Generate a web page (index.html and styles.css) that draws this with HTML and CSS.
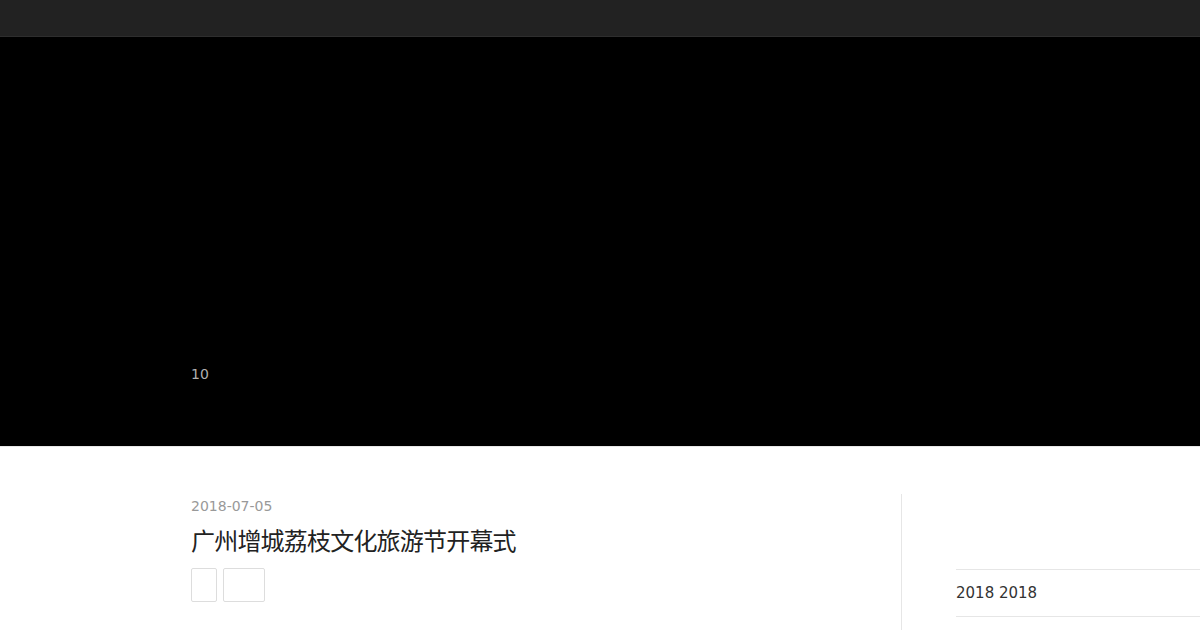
FILE: index.html
```html
<!DOCTYPE html>
<html lang="zh-CN">
<head>
	<meta charset="UTF-8">
	<title>2018-07-05</title>
	<link rel="stylesheet" href="styles.css">
</head>
<body>
	<div id="topbar"></div>
	<div id="hero">
		<div class="hero-inner">
			<div class="hero-count">10</div>
		</div>
	</div>
	<div id="page">
		<div id="main">
			<div class="post-date">2018-07-05</div>
			<h1 class="post-title">广州增城荔枝文化旅游节开幕式</h1>
			<div class="post-tags">
				<span class="tag tag-small"></span>
				<span class="tag tag-wide"></span>
			</div>
		</div>
		<div id="sidebar">
			<ul class="archive">
				<li class="archive-item">2018 2018</li>
			</ul>
		</div>
	</div>
</body>
</html>
```

FILE: styles.css
```css
html, body {
	margin: 0;
	padding: 0;
}
body {
	background-color: #fff;
	color: #333;
	font-family: "DejaVu Sans", "Noto Sans CJK SC", sans-serif;
	overflow-x: hidden;
}
#topbar {
	height: 36px;
	background-color: #222;
	border-bottom: 1px solid #2e2e2e;
}
#hero {
	height: 409px;
	background-color: #000;
	border-bottom: 1px solid #e8e8e8;
	display: flex;
	flex-direction: column;
	justify-content: flex-end;
}
.hero-inner {
	padding: 0 0 62px 191px;
}
.hero-count {
	font-size: 14px;
	line-height: 20px;
	color: #b0b0b0;
}
#page {
	display: flex;
	margin-top: 47px;
	padding-left: 191px;
}
#main {
	width: 710px;
	flex-shrink: 0;
	padding-top: 2px;
}
.post-date {
	font-size: 14px;
	line-height: 20px;
	color: #999;
}
.post-title {
	margin: 10px 0 0 0;
	font-size: 24px;
	line-height: 32px;
	font-weight: normal;
	letter-spacing: -0.8px;
	color: #222;
}
.post-tags {
	display: flex;
	gap: 6px;
	margin-top: 10px;
}
.tag {
	display: block;
	height: 32px;
	border: 1px solid #ddd;
	border-radius: 2px;
}
.tag-small {
	width: 24px;
}
.tag-wide {
	width: 40px;
}
#sidebar {
	flex-shrink: 0;
	width: 400px;
	min-height: 140px;
	border-left: 1px solid #e6e6e6;
	padding: 75px 0 0 54px;
}
.archive {
	list-style: none;
	margin: 0;
	padding: 0;
	border-top: 1px solid #e6e6e6;
}
.archive-item {
	font-size: 15px;
	line-height: 46px;
	color: #333;
	border-bottom: 1px solid #e6e6e6;
}
```
